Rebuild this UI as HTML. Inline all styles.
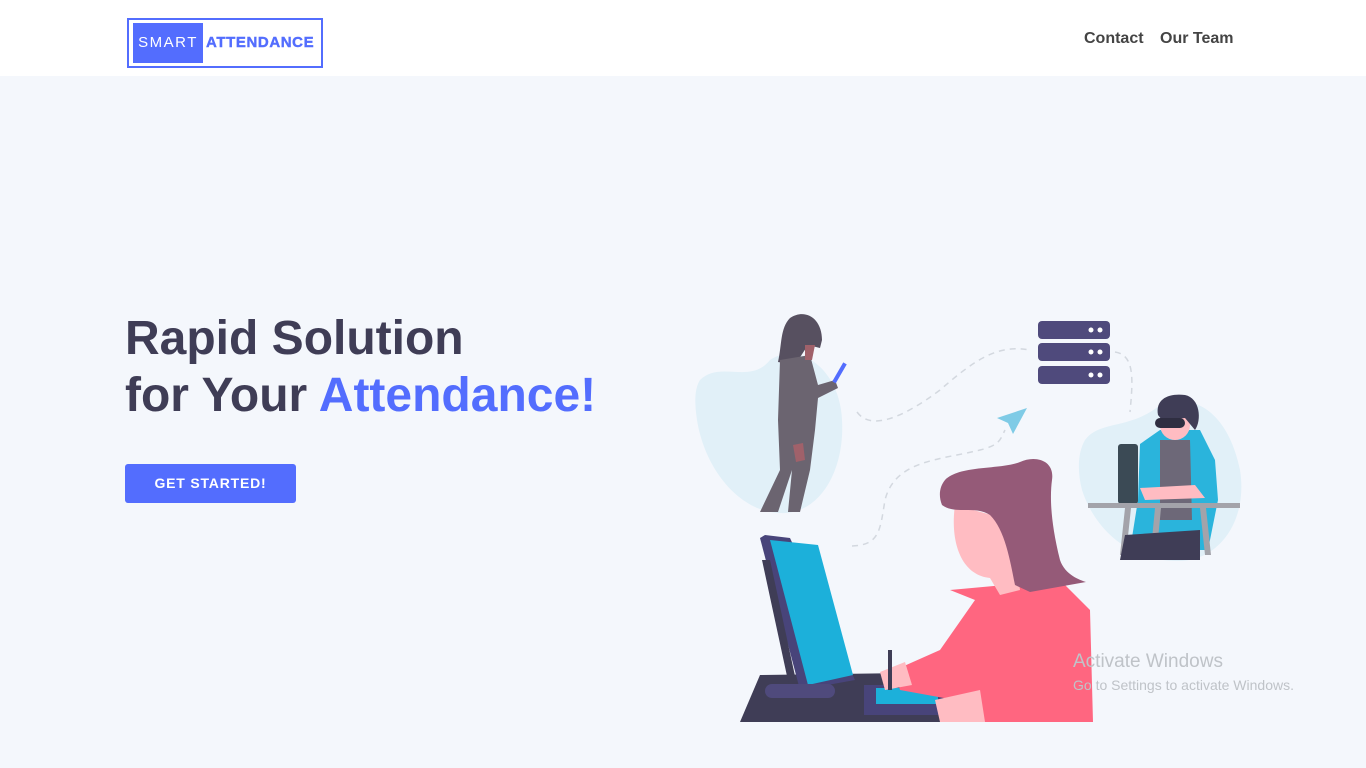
<!DOCTYPE html>
<html><head><meta charset="utf-8"><style>
*{margin:0;padding:0;box-sizing:border-box}
body{width:1366px;height:768px;background:#f4f7fc;font-family:"Liberation Sans",sans-serif;position:relative;overflow:hidden}
.hdr{position:absolute;left:0;top:0;width:1366px;height:76px;background:#fff}
.logo{position:absolute;left:127px;top:18px;width:196px;height:50px;border:2px solid #536dfe;}
.logo .s{position:absolute;left:4px;top:3px;width:70px;height:40px;background:#536dfe;color:#fff;font-size:15px;letter-spacing:1.5px;line-height:40px;text-align:center}
.logo .a{position:absolute;left:77px;top:3px;line-height:40px;color:#536dfe;font-weight:900;font-size:15px;letter-spacing:.6px;-webkit-text-stroke:.4px #536dfe}
.nav{position:absolute;top:30px;font-size:16px;font-weight:bold;color:#444}
h1{position:absolute;left:125px;top:310px;font-size:48px;line-height:57px;color:#3f3d56;font-weight:bold}
h1 span{color:#536dfe}
.btn{position:absolute;left:125px;top:464px;width:171px;height:39px;background:#536dfe;color:#fff;border-radius:3px;font-size:14px;font-weight:bold;letter-spacing:.8px;text-align:center;line-height:39px}
.aw{position:absolute;left:1073px;top:651px;color:#bfc3c8;font-size:19px}
.aw2{position:absolute;left:1073px;top:677px;color:#bfc3c8;font-size:14px}
</style></head><body>
<div class="hdr">
<div class="logo"><div class="s">SMART</div><div class="a">ATTENDANCE</div></div>
<div class="nav" style="left:1084px">Contact</div>
<div class="nav" style="left:1160px">Our Team</div>
</div>
<h1>Rapid Solution<br>for Your <span>Attendance!</span></h1>
<div class="btn">GET STARTED!</div>
<svg style="position:absolute;left:0;top:0" width="1366" height="768">
<g fill="none" stroke="#d3d8df" stroke-width="1.5" stroke-dasharray="6 5">
<path d="M857 412 C870 430 900 420 940 390 C980 355 1000 345 1030 350"/>
<path d="M1115 352 C1135 355 1133 380 1130 412"/>
<path d="M852 546 C880 545 880 530 885 500 C895 460 940 460 980 450 C1000 445 1000 440 1005 430"/>
</g>
<path d="M700 380 C720 360 750 385 770 360 C800 340 840 370 842 420 C845 470 820 515 780 513 C740 512 705 470 697 420 C694 400 695 388 700 380Z" fill="#e1f0f8"/>
<path d="M1085 440 C1100 420 1130 430 1160 405 C1200 390 1230 420 1240 470 C1248 520 1220 560 1180 561 C1130 562 1095 530 1082 490 C1077 470 1078 452 1085 440Z" fill="#e1f0f8"/>
<path d="M790 318 C805 308 822 318 822 340 L820 348 L808 345 L795 365 L778 362 C782 345 780 328 790 318Z" fill="#575060"/>
<path d="M780 360 L810 355 L818 385 L835 380 L838 388 L818 398 L815 430 L810 470 L800 512 L788 512 L792 470 L778 512 L760 512 L780 470 L778 420 Z" fill="#6b6470"/>
<path d="M805 345 L815 345 L812 360 L805 360Z" fill="#a0616a"/>
<rect x="838" y="362" width="4" height="22" fill="#536dfe" transform="rotate(30 840 372)"/>
<path d="M793 445 L803 443 L805 460 L796 462Z" fill="#a0616a"/>
<g fill="#4f4a7c"><rect x="1038" y="321" width="72" height="18" rx="4"/><rect x="1038" y="343" width="72" height="18" rx="4"/><rect x="1038" y="366" width="72" height="18" rx="4"/></g>
<g fill="#fff"><circle cx="1091" cy="330" r="2.5"/><circle cx="1100" cy="330" r="2.5"/><circle cx="1091" cy="352" r="2.5"/><circle cx="1100" cy="352" r="2.5"/><circle cx="1091" cy="375" r="2.5"/><circle cx="1100" cy="375" r="2.5"/></g>
<path d="M997 418 L1027 408 L1013 434 L1008 423Z" fill="#7fcbe6"/>
<path d="M1140 444 L1160 430 L1200 430 L1215 460 L1218 500 L1208 550 L1130 550 L1138 500Z" fill="#2ab4dc"/>
<path d="M1160 440 L1190 440 L1192 520 L1160 520Z" fill="#6d6878"/>
<circle cx="1175" cy="425" r="15" fill="#ffbcc2"/>
<path d="M1158 415 C1155 398 1170 393 1185 395 C1200 398 1202 420 1195 430 L1185 418 L1162 420Z" fill="#3f3d56"/>
<rect x="1155" y="418" width="30" height="10" rx="5" fill="#2f2e41"/>
<rect x="1118" y="444" width="20" height="60" rx="3" fill="#3b4a55"/>
<path d="M1140 488 L1195 485 L1205 498 L1145 500Z" fill="#ffbcc2"/>
<rect x="1088" y="503" width="152" height="5" fill="#a3a3aa"/>
<path d="M1125 508 L1120 555 L1126 555 L1131 508Z M1155 508 L1150 560 L1156 560 L1161 508Z M1200 508 L1205 555 L1211 555 L1206 508Z" fill="#a3a3aa"/>
<path d="M1125 535 L1200 530 L1200 560 L1120 560Z" fill="#3f3d56"/>
<path d="M760 675 L980 672 L980 722 L740 722Z" fill="#3f3d56"/>
<path d="M760 538 L765 535 L790 538 L855 680 L800 690 Z" fill="#48447a"/>
<path d="M770 540 L818 545 L853 675 L808 685Z" fill="#1cb0da"/>
<path d="M762 560 L790 690 L798 690 L770 560Z" fill="#3f3d56"/>
<rect x="765" y="684" width="70" height="14" rx="7" fill="#4f4a7c"/>
<rect x="864" y="685" width="88" height="30" fill="#48447a"/>
<rect x="876" y="688" width="62" height="16" fill="#1cb0da"/>
<path d="M950 590 L1060 580 L1090 610 L1093 722 L960 722 L955 700 L900 690 L895 670 L940 650 L975 600Z" fill="#ff6680"/>
<path d="M935 700 L980 690 L985 722 L940 722Z" fill="#ffbcc2"/>
<path d="M880 672 L905 662 L912 685 L885 690Z" fill="#ffbcc2"/>
<rect x="888" y="650" width="4" height="40" fill="#3f3d56"/>
<path d="M955 505 C950 540 960 575 990 578 L1000 595 L1020 590 L1010 520Z" fill="#ffbcc2"/>
<path d="M945 480 C960 465 1000 470 1020 462 C1035 455 1055 460 1052 480 C1050 495 1050 520 1060 560 C1065 575 1080 580 1086 582 L1030 592 L1015 585 C1010 560 1005 530 990 515 C975 505 955 515 942 505 C938 495 940 486 945 480Z" fill="#955a78"/>
</svg>
<div class="aw">Activate Windows</div>
<div class="aw2">Go to Settings to activate Windows.</div>
</body></html>
